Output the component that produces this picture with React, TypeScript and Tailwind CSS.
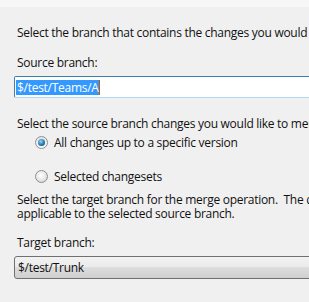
export default function App() {
  return (
    <div
      className="w-[309px] h-[302px] overflow-hidden bg-[#f0f0f0] text-[12px] text-[#111] leading-[15px] tracking-[-0.28px]"
      style={{ fontFamily: '"Segoe UI", "Open Sans", "Noto Sans", sans-serif' }}
    >
      <div className="h-[7px] bg-[#f7f7f7]" />
      <div className="pl-[17px] pt-[18px] whitespace-nowrap">
        Select the branch that contains the changes you would like to merge.
      </div>
      <div className="pl-[17px] pt-[15px]">Source branch:</div>
      <div className="ml-[14px] mt-[6px] h-[22px] w-[320px] bg-white border border-[#3c7fb1] border-b-[#b5d7f1] rounded-[2px] flex items-center pl-[1px]">
        <span className="bg-[#3399ff] text-white pl-[1px] leading-[15px]">$/test/Teams/A</span>
        <span className="w-[1px] h-[15px] bg-[#c45a00]" />
      </div>
      <div className="pl-[17px] pt-[18px] whitespace-nowrap">
        Select the source branch changes you would like to merge:
      </div>
      <label className="flex items-center gap-[6px] pl-[35px] mt-[4px]">
        <span className="w-[13px] h-[13px] rounded-full border border-[#8e8f8f] bg-[linear-gradient(#e4e4e4,#fbfbfb)] flex items-center justify-center">
          <span className="w-[7px] h-[7px] rounded-full bg-[radial-gradient(circle_at_40%_35%,#8fd8f8,#1d6fa8_60%,#0b3f6b)]" />
        </span>
        <span>All changes up to a specific version</span>
      </label>
      <label className="flex items-center gap-[6px] pl-[35px] mt-[19px]">
        <span className="w-[13px] h-[13px] rounded-full border border-[#8e8f8f] bg-[radial-gradient(circle_at_45%_40%,#ffffff,#e8e8e8_50%,#c8c8c8)]" />
        <span>Selected changesets</span>
      </label>
      <div className="pl-[17px] pt-[9px] whitespace-nowrap leading-[14px]">
        Select the target branch for the merge operation.&nbsp; The drop-down list contains only branches
        <br />
        applicable to the selected source branch.
      </div>
      <div className="pl-[17px] pt-[14px]">Target branch:</div>
      <div className="ml-[14px] mt-[6px] h-[23px] w-[320px] border border-[#707070] rounded-[3px] bg-[linear-gradient(#f2f2f2,#ebebeb_50%,#dddddd_50%,#cfcfcf)] flex items-center pl-[3px]">
        $/test/Trunk
      </div>
    </div>
  );
}
